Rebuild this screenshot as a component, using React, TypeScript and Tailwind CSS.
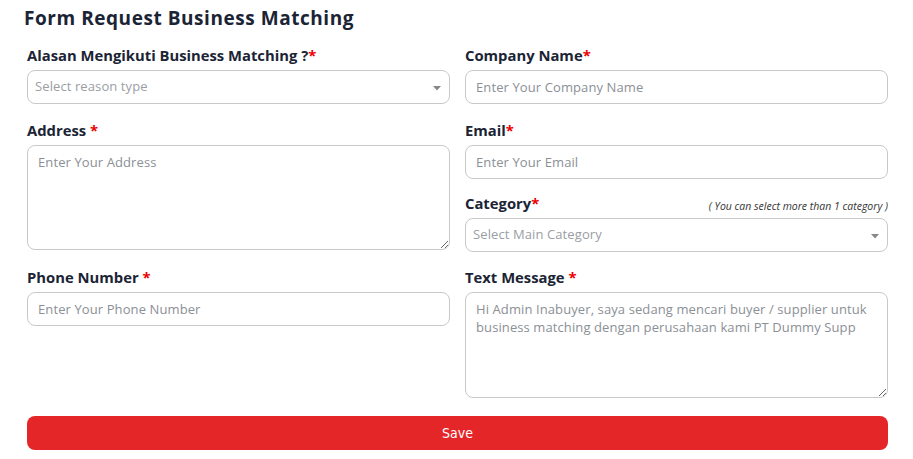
import React from "react";

const font = { fontFamily: '"Open Sans", "Noto Sans", sans-serif' };

function Label({ text, star, spaced }: { text: string; star?: boolean; spaced?: boolean }) {
  return (
    <div className="h-[20px] mb-[4px] text-[14.8px] leading-[18px] font-bold text-[#1b2434]">
      {text}
      {spaced ? " " : ""}
      {star !== false && <span className="text-[#ee0000]">*</span>}
    </div>
  );
}

const inputCls =
  "w-full h-[34px] rounded-[8px] border border-[#c9c9c9] bg-white px-[10px] text-[13px] text-[#333] placeholder:text-[#8b8f96] outline-none tracking-[0.1px]";

function Caret() {
  return (
    <svg width="8" height="5" viewBox="0 0 8 5" className="absolute right-[8px] top-[15px]">
      <path d="M0 0 L8 0 L4 4.5 Z" fill="#888" />
    </svg>
  );
}

function SelectBox({ placeholder }: { placeholder: string }) {
  return (
    <div className="relative w-full h-[34px] rounded-[8px] border border-[#c9c9c9] bg-white pl-[7px] flex items-center text-[13px] text-[#9a9ea4] tracking-[0.1px]">
      {placeholder}
      <Caret />
    </div>
  );
}

export default function App() {
  return (
    <div className="w-[913px] h-[459px] bg-white" style={font}>
      <div className="pl-[24px] pt-[5px] h-[32px] text-[19px] leading-[26px] font-bold text-[#1b2434] tracking-[0.55px]">
        Form Request Business Matching
      </div>
      <div className="px-[27px] pt-[14px] pr-[25px]">
        <div className="grid grid-cols-2 gap-x-[15px]">
          <div className="flex flex-col">
            <Label text="Alasan Mengikuti Business Matching ?" />
            <SelectBox placeholder="Select reason type" />
          </div>
          <div className="flex flex-col">
            <Label text="Company Name" />
            <input className={inputCls} placeholder="Enter Your Company Name" />
          </div>

          <div className="flex flex-col mt-[17px]">
            <Label text="Address" spaced />
            <textarea
              className="w-full h-[105px] rounded-[8px] border border-[#c9c9c9] bg-white px-[10px] py-[7px] text-[13px] leading-[18px] placeholder:text-[#8b8f96] outline-none tracking-[0.1px]"
              placeholder="Enter Your Address"
            />
          </div>
          <div className="flex flex-col mt-[17px]">
            <Label text="Email" />
            <input className={inputCls} placeholder="Enter Your Email" />
            <div className="mt-[15px] flex items-start justify-between h-[20px] mb-[4px]">
              <div className="text-[14.8px] leading-[18px] font-bold text-[#1b2434]">
                Category<span className="text-[#ee0000]">*</span>
              </div>
              <div className="text-[10.5px] italic text-[#333] leading-[14px] pt-[5px]">
                ( You can select more than 1 category )
              </div>
            </div>
            <SelectBox placeholder="Select Main Category" />
          </div>

          <div className="flex flex-col mt-[16px]">
            <Label text="Phone Number" spaced />
            <input className={inputCls} placeholder="Enter Your Phone Number" />
          </div>
          <div className="flex flex-col mt-[16px]">
            <Label text="Text Message" spaced />
            <textarea
              className="w-full h-[106px] rounded-[8px] border border-[#c9c9c9] bg-white px-[10px] py-[7px] text-[13px] leading-[18px] placeholder:text-[#8b8f96] outline-none tracking-[0.1px]"
              placeholder="Hi Admin Inabuyer, saya sedang mencari buyer / supplier untuk business matching dengan perusahaan kami PT Dummy Supp"
            />
          </div>
        </div>
        <button
          className="mt-[18px] w-full h-[34px] rounded-[8px] bg-[#e52628] text-white text-[14px]"
          style={{ fontFamily: '"DejaVu Sans Condensed", "DejaVu Sans", sans-serif' }}
        >
          Save
        </button>
      </div>
    </div>
  );
}
